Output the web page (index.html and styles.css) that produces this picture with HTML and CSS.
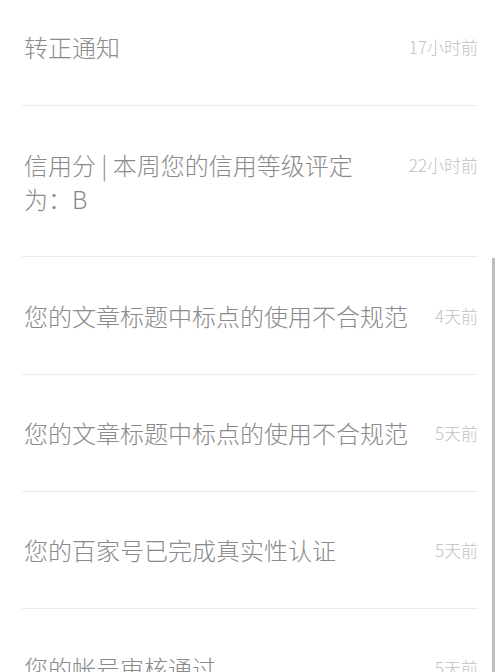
FILE: index.html
```html
<!DOCTYPE html>
<html>
<head>
    <meta charset="utf-8">
    <title>消息通知</title>
<link rel="stylesheet" href="styles.css">
</head>
<body>
    <div class="page">
        <ul class="notice-list">
            <li class="notice">
                <span class="notice-title">转正通知</span>
                <span class="notice-time">17小时前</span>
            </li>
            <li class="notice">
                <span class="notice-title">信用分 | 本周您的信用等级评定为：B</span>
                <span class="notice-time">22小时前</span>
            </li>
            <li class="notice">
                <span class="notice-title">您的文章标题中标点的使用不合规范</span>
                <span class="notice-time">4天前</span>
            </li>
            <li class="notice">
                <span class="notice-title">您的文章标题中标点的使用不合规范</span>
                <span class="notice-time">5天前</span>
            </li>
            <li class="notice">
                <span class="notice-title">您的百家号已完成真实性认证</span>
                <span class="notice-time">5天前</span>
            </li>
            <li class="notice">
                <span class="notice-title">您的帐号审核通过</span>
                <span class="notice-time">5天前</span>
            </li>
        </ul>
        <div class="scrollbar"></div>
    </div>
</body>
</html>
```

FILE: styles.css
```css
body {
    margin: 0;
    padding: 0;
    background-color: #fff;
    font-family: "Noto Sans CJK SC", "Noto Sans", sans-serif;
    overflow: hidden;
    height: 672px;
}

.page {
    position: relative;
    height: 672px;
    overflow: hidden;
}

.notice-list {
    list-style: none;
    margin: -11.3px 0 0 0; /* list is scrolled a little */
    padding: 0 22px;
}

.notice {
    display: flex;
    align-items: flex-start;
    padding: 41.6px 0 40.7px 2px;
    border-bottom: 1px solid #ececec;
}

.notice-title {
    flex: 1;
    font-size: 24px;
    font-weight: 300;
    line-height: 34px;
    color: #8a8a8a;
}

.notice-time {
    flex-shrink: 0;
    margin-left: 22px;
    font-size: 17px;
    font-weight: 300;
    line-height: 34px;
    color: #c2c2c2;
}

.scrollbar {
    position: absolute;
    left: 492px;
    top: 258px;
    width: 3px;
    height: 430px;
    background-color: #bdbdbd;
}
```
